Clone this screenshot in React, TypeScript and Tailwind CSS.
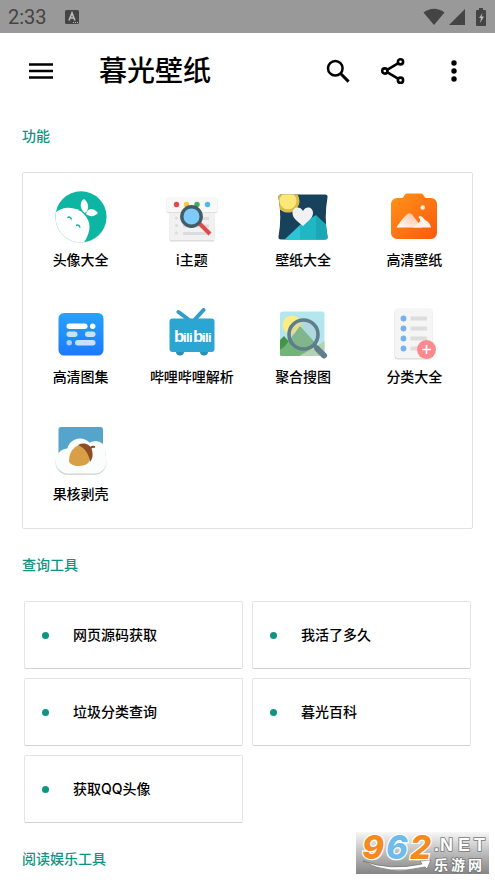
import type { ReactNode } from "react";

const MenuIcon = () => (
  <svg viewBox="0 0 24 16" className="h-4 w-6" aria-hidden="true">
    <path d="M0 1.5h24M0 8h24M0 14.5h24" stroke="#000" strokeWidth="2.6" />
  </svg>
);

const SearchIcon = () => (
  <svg viewBox="0 0 24 24" className="size-6" fill="none" stroke="#000" aria-hidden="true">
    <circle cx="9.3" cy="9.3" r="7.3" strokeWidth="2.5" />
    <path d="M14.8 14.8l7.8 7.8" strokeWidth="3" />
  </svg>
);

const ShareIcon = () => (
  <svg viewBox="0 0 26 28" className="h-7 w-[26px]" fill="none" stroke="#000" strokeWidth="2.6" aria-hidden="true">
    <path d="M7.5 12.7L18 6.3M7.5 15.3L18 21.7" />
    <circle cx="4.8" cy="14" r="2.6" />
    <circle cx="20.5" cy="4.8" r="2.6" />
    <circle cx="20.5" cy="23.2" r="2.6" />
  </svg>
);

const MoreIcon = () => (
  <svg viewBox="0 0 6 22" className="h-[22px] w-1.5" aria-hidden="true">
    <circle cx="3" cy="3" r="2.7" />
    <circle cx="3" cy="11" r="2.7" />
    <circle cx="3" cy="19" r="2.7" />
  </svg>
);

const Icon = ({ children }: { children: ReactNode }) => (
  <svg viewBox="0 0 52 52" className="size-[52px]" aria-hidden="true">
    {children}
  </svg>
);

const AvatarIcon = () => (
  <Icon>
    <defs>
      <clipPath id="avatar-clip">
        <circle cx="26" cy="26" r="25.5" />
      </clipPath>
    </defs>
    <circle cx="26" cy="26.4" r="25.5" fill="#d5dddb" />
    <circle cx="26" cy="25.7" r="25.5" fill="#0cb6a2" />
    <g clipPath="url(#avatar-clip)">
      <path d="M-2 24C5 15 20 14 29 23c8 9 7 18-1 30H-3z" fill="#fff" />
      <path d="M29.5 22C24 17 25 10 29 8c5 4 5 9 2.5 13z" fill="#fff" />
      <path d="M31 23c2-6 7-7 12-1-4 4-8 4-12 1z" fill="#fff" />
    </g>
    <path d="M12.5 26.5c2-1 3.5 0 4 2M21 34.5c2-1 3.5 0 4 2" fill="none" stroke="#17a997" strokeWidth="1.5" />
  </Icon>
);

const ThemeIcon = () => (
  <Icon>
    <path d="M3.5 18h45v31a1.5 1.5 0 0 1-1.5 1.5H5A1.5 1.5 0 0 1 3.5 49z" fill="#dedede" />
    <path d="M4 18h44v31H4z" fill="#f1f1f1" />
    <rect x="0.5" y="7" width="51" height="15" rx="1.5" fill="#dedede" />
    <rect x="0.5" y="6" width="51" height="15" rx="1.5" fill="#f8f8f8" />
    <circle cx="10.5" cy="13.5" r="2.7" fill="#e5484b" />
    <circle cx="20.5" cy="13.5" r="2.7" fill="#f5c938" />
    <circle cx="31" cy="13.5" r="2.7" fill="#46aa54" />
    <circle cx="41.5" cy="13.5" r="2.7" fill="#4db9ef" />
    <g fill="#dcdcdc">
      <circle cx="10.5" cy="27" r="1.5" />
      <circle cx="10.5" cy="34.5" r="1.5" />
      <circle cx="10.5" cy="42" r="1.5" />
      <path d="M17 26h26v3H17zM17 33.5h26v3H17zM17 41h26v3H17z" />
    </g>
    <path d="M32 31l12 12" stroke="#e04b49" strokeWidth="4" />
    <circle cx="25.5" cy="25.5" r="9.7" fill="#7ccbfa" stroke="#455c66" strokeWidth="3.4" />
  </Icon>
);

const WallpaperIcon = () => (
  <Icon>
    <defs>
      <clipPath id="wall-clip">
        <path d="M4 3.5h44q3 0 2.500 3-3.500 19.500 0 39 .5 3-2.500 3H4q-3 0-2.500-3 3.500-19.500 0-39-.5-3 2.500-3z" />
      </clipPath>
    </defs>
    <g clipPath="url(#wall-clip)">
      <path d="M0 0h52v52H0z" fill="#18415b" />
      <circle cx="11" cy="10" r="11.5" fill="#dcbb45" />
      <circle cx="11" cy="10" r="8.5" fill="#fce879" />
      <path d="M7 49l16-15v15z" fill="#29c7d5" />
      <path d="M23 34l16-10v25H23z" fill="#20b7c5" />
      <path d="M39 24l14 13v12H39z" fill="#1aa8b7" />
    </g>
    <path d="M26 35C20 30 15.500 27 15.500 22c0-6 7.500-7.500 10.500-2 3-5.500 10-4 10 2 0 5-5 8-10 13z" fill="#f1f1f3" />
  </Icon>
);

const CameraIcon = () => (
  <Icon>
    <defs>
      <linearGradient id="camera-fill" x1="0" y1="0" x2="1" y2="1">
        <stop offset="0" stopColor="#ff9417" />
        <stop offset="1" stopColor="#fb5810" />
      </linearGradient>
      <linearGradient id="peak-fill" x1="0" y1="1" x2="1" y2="0">
        <stop offset="0" stopColor="#fff" />
        <stop offset="1" stopColor="#ffb78f" />
      </linearGradient>
    </defs>
    <path d="M9 7h5c2 0 2-4.500 5-4.500h14c3 0 3 4.500 5 4.500h5a6 6 0 0 1 6 6v29a6 6 0 0 1-6 6H9a6 6 0 0 1-6-6V13a6 6 0 0 1 6-6z" fill="url(#camera-fill)" />
    <path d="M8.500 36.500Q15 26 20 22.500q2-1 4 1l10 13z" fill="url(#peak-fill)" />
    <path d="M25 36.500l6-5q2-1.500 1-3.500-3-2 0-3 2 0 5 4 5 2 6 7.500z" fill="#fff1e9" />
    <circle cx="34.7" cy="16.5" r="2.2" fill="#fff0df" />
  </Icon>
);

const GalleryIcon = () => (
  <Icon>
    <defs>
      <linearGradient id="gallery-fill" x1="0" y1="0" x2="0" y2="1">
        <stop offset="0" stopColor="#27a3fd" />
        <stop offset="1" stopColor="#1b7afa" />
      </linearGradient>
    </defs>
    <rect x="3.5" y="5" width="45" height="42.5" rx="5.5" fill="url(#gallery-fill)" />
    <rect x="11.5" y="15.5" width="21" height="5.5" rx="2.75" fill="#fff" />
    <circle cx="37.7" cy="18.3" r="2.7" fill="#fff" />
    <g fill="#c7e2ff">
      <rect x="11.5" y="23.5" width="11" height="5.5" rx="2.75" />
      <rect x="30" y="23.5" width="10.5" height="5.5" rx="2.75" />
      <circle cx="14.2" cy="34.7" r="2.7" fill="#a9cfff" />
      <rect x="20" y="32" width="20.5" height="5.5" rx="2.75" />
    </g>
  </Icon>
);

const BiliIcon = () => (
  <Icon>
    <path d="M12.500 4l10 7.500M37.500 2L28 12.500" stroke="#2f9dc5" strokeWidth="4" strokeLinecap="round" />
    <circle cx="14" cy="43.5" r="4" fill="#258fb8" />
    <circle cx="38" cy="43.5" r="4" fill="#258fb8" />
    <rect x="3.5" y="10.5" width="45" height="33.5" rx="3" fill="#2ba5d1" />
    <g fill="#fff" className="font-['Liberation_Sans',sans-serif] font-bold">
      <text x="8" y="34" className="text-[17px]">b</text>
      <text y="34" className="text-[13px]">
        <tspan x="17">i</tspan>
        <tspan x="20">l</tspan>
        <tspan x="23">i</tspan>
      </text>
      <text x="27" y="34" className="text-[17px]">b</text>
      <text y="34" className="text-[13px]">
        <tspan x="36">i</tspan>
        <tspan x="39">l</tspan>
        <tspan x="42">i</tspan>
      </text>
    </g>
  </Icon>
);

const ImageSearchIcon = () => (
  <Icon>
    <defs>
      <clipPath id="photo-clip">
        <rect x="3" y="3.5" width="44.5" height="44.5" rx="2.5" />
      </clipPath>
    </defs>
    <g clipPath="url(#photo-clip)">
      <path d="M0 0h52v52H0z" fill="#b4e7ed" />
      <circle cx="15" cy="17" r="9.5" fill="#fbec83" />
      <path d="M0 35l7-7 11 12v10H0z" fill="#439647" />
      <path d="M0 44l8-6 15-20 27 30v6H0z" fill="#72b579" />
      <path d="M22 48l26-15v17z" fill="#b2d2b0" />
    </g>
    <circle cx="26.5" cy="26.5" r="14" fill="#a4b9bd" fillOpacity="0.3" />
    <path d="M37 37l3.500 3.500" stroke="#607d8b" strokeWidth="4" />
    <path d="M40.500 41l6.500 6.500" stroke="#607d8b" strokeWidth="6" strokeLinecap="round" />
    <circle cx="26.5" cy="26.5" r="14.5" fill="none" stroke="#607d8b" strokeWidth="3.6" />
  </Icon>
);

const CategoryIcon = () => (
  <Icon>
    <rect x="6.5" y="1" width="38" height="50.5" rx="3.5" fill="#dadada" />
    <rect x="7" y="0.3" width="37.5" height="50" rx="3.5" fill="#f5f5f5" />
    <g fill="#75b0ef">
      <circle cx="15.5" cy="10.5" r="2.9" />
      <circle cx="15.5" cy="20.5" r="2.9" />
      <circle cx="15.5" cy="30.5" r="2.9" />
      <circle cx="15.5" cy="40.5" r="2.9" />
    </g>
    <path d="M22.500 8.500H39v4H22.500zM22.500 18.500H39v4H22.500zM22.500 28.500H39v4H22.500zM22.500 38.500H39v4H22.500z" fill="#dddddd" />
    <circle cx="38.5" cy="41.5" r="9.5" fill="#f98b8e" />
    <path d="M38.500 37v9M34 41.500h9" stroke="#fff" strokeWidth="1.6" />
  </Icon>
);

const Cloud = () => (
  <>
    <circle cx="13" cy="36" r="12.5" />
    <circle cx="25" cy="26.5" r="13" />
    <circle cx="40.5" cy="26.5" r="10.5" />
    <circle cx="39.5" cy="36.5" r="12" />
    <path d="M13 30h27v18.500H13z" />
  </>
);

const NutIcon = () => (
  <Icon>
    <rect x="3.5" y="2" width="44.5" height="34" rx="2.5" fill="#54a4cb" />
    <g fill="#d0d2d3" transform="translate(0 1.3)">
      <Cloud />
    </g>
    <g fill="#fbfcfc">
      <Cloud />
    </g>
    <path d="M24 20C17 23 14 29 14 36c1 6 16 7 20 1 3-6-2-15-10-17z" fill="#d99f47" />
    <path d="M23 20c6-3 12-1 14 5 1 5 1 8-2 12-1-8-5-14-12-17z" fill="#8c4c26" />
    <path d="M35 24q1-3 5-2" fill="none" stroke="#8c4c26" strokeWidth="2" />
  </Icon>
);

const features = [
  { label: "头像大全", icon: <AvatarIcon /> },
  { label: "i主题", icon: <ThemeIcon /> },
  { label: "壁纸大全", icon: <WallpaperIcon /> },
  { label: "高清壁纸", icon: <CameraIcon /> },
  { label: "高清图集", icon: <GalleryIcon /> },
  { label: "哔哩哔哩解析", icon: <BiliIcon /> },
  { label: "聚合搜图", icon: <ImageSearchIcon /> },
  { label: "分类大全", icon: <CategoryIcon /> },
  { label: "果核剥壳", icon: <NutIcon /> },
];

const queryTools = ["网页源码获取", "我活了多久", "垃圾分类查询", "暮光百科", "获取QQ头像"];

const SectionTitle = ({ children }: { children: ReactNode }) => (
  <h2 className="text-sm leading-5 font-medium text-[#0f9484]">{children}</h2>
);

const StatusBar = () => (
  <div className="flex h-[33px] items-center justify-between bg-[#999] pr-[9px] pl-2 text-[#444]">
    <div className="flex items-center gap-[18px]">
      <span className="font-['Roboto',sans-serif] text-xl leading-6">2:33</span>
      <svg viewBox="0 0 14 14" className="size-3.5" aria-hidden="true">
        <rect width="14" height="14" rx="1.5" fill="#444" />
        <path d="M4 10.500L7 3l3 7.500M5.200 8h3.600" fill="none" stroke="#bbb" strokeWidth="1.6" />
        <path d="M8 12.500h5" stroke="#bbb" strokeDasharray="1 1" />
      </svg>
    </div>
    <div className="flex items-center" aria-hidden="true">
      <svg viewBox="0 0 22 17" className="h-[17px] w-[22px]" fill="#444">
        <path d="M0.500 4.500Q11-3 21.500 4.500L11 17z" />
      </svg>
      <svg viewBox="0 0 16 16" className="ml-1 size-4" fill="#444">
        <path d="M16 0v16H0z" />
      </svg>
      <svg viewBox="0 0 10 18" className="ml-[11px] h-[18px] w-2.5">
        <path d="M3 0h4v2h2q1 0 1 1v14q0 1-1 1H1q-1 0-1-1V3q0-1 1-1h2z" fill="#444" />
        <path d="M6.500 5L3 10h2l-1 5 4-6.500H5.500z" fill="#bbb" />
      </svg>
    </div>
  </div>
);

const Watermark = () => (
  <div className="absolute right-1.5 bottom-1.5 h-[42px] w-[133px] bg-linear-to-b from-[#f7f7f7] to-[#858585]">
    <svg viewBox="0 0 133 42" className="h-full w-full overflow-visible" role="img" aria-label="962.NET 乐游网">
      <path d="M7 29q27 10 59 3l-2-3 11-1-4 9-2-2Q31 44 7 29z" fill="#fff" stroke="#777" strokeWidth="0.8" />
      <g stroke="#fff" strokeWidth="2.5" paintOrder="stroke" className="font-['Inter','Liberation_Sans',sans-serif] text-[33px] font-extrabold italic">
        <text x="6" y="27" fill="#f58a1f">9</text>
        <text x="30" y="27" fill="#6fbbea">6</text>
        <text x="54" y="27" fill="#f58a1f">2</text>
      </g>
      <g fill="#fff" stroke="#777" strokeWidth="1.6" paintOrder="stroke">
        <text y="19" className="font-['Liberation_Sans',sans-serif] text-[18px] font-bold">
          <tspan x="78">.</tspan>
          <tspan x="84">N</tspan>
          <tspan x="102">E</tspan>
          <tspan x="118">T</tspan>
        </text>
        <text y="38" className="font-['Noto_Sans_CJK_SC',sans-serif] text-[14px] font-bold">
          <tspan x="78">乐</tspan>
          <tspan x="95">游</tspan>
          <tspan x="112">网</tspan>
        </text>
      </g>
    </svg>
  </div>
);

export default function App() {
  return (
    <div className="relative min-h-screen overflow-hidden bg-white font-['Inter','Noto_Sans_CJK_SC',sans-serif] text-black">
      <StatusBar />
      <header className="flex h-[76px] items-center pr-[38px] pl-[29px]">
        <button type="button" aria-label="菜单">
          <MenuIcon />
        </button>
        <h1 className="ml-[46px] flex-1 text-[28px] leading-9 font-medium">暮光壁纸</h1>
        <button type="button" aria-label="搜索">
          <SearchIcon />
        </button>
        <button type="button" aria-label="分享" className="ml-[30px]">
          <ShareIcon />
        </button>
        <button type="button" aria-label="更多" className="ml-[45px]">
          <MoreIcon />
        </button>
      </header>

      <main className="flex flex-col gap-[26px] px-[22px] pt-[17px] pb-[11px]">
        <SectionTitle>功能</SectionTitle>
        <section className="grid grid-cols-4 rounded-[2px] border border-[#e2e2e2] p-0.5">
          {features.map(({ label, icon }) => (
            <button key={label} type="button" className="flex flex-col items-center pt-4 pb-[22px]">
              {icon}
              <span className="mt-[7px] text-sm leading-5 font-medium whitespace-nowrap">{label}</span>
            </button>
          ))}
        </section>

        <SectionTitle>查询工具</SectionTitle>
        <section className="mx-0.5 grid grid-cols-2 gap-[9px]">
          {queryTools.map((tool) => (
            <button
              key={tool}
              type="button"
              className="flex h-[68px] items-center gap-6 rounded-[2px] border border-[#e4e4e4] border-b-[#d2d2d2] pl-[17px] text-sm leading-5 font-medium"
            >
              <span className="size-[7px] rounded-full bg-[#0f9484]" />
              {tool}
            </button>
          ))}
        </section>

        <SectionTitle>阅读娱乐工具</SectionTitle>
      </main>
      <Watermark />
    </div>
  );
}
